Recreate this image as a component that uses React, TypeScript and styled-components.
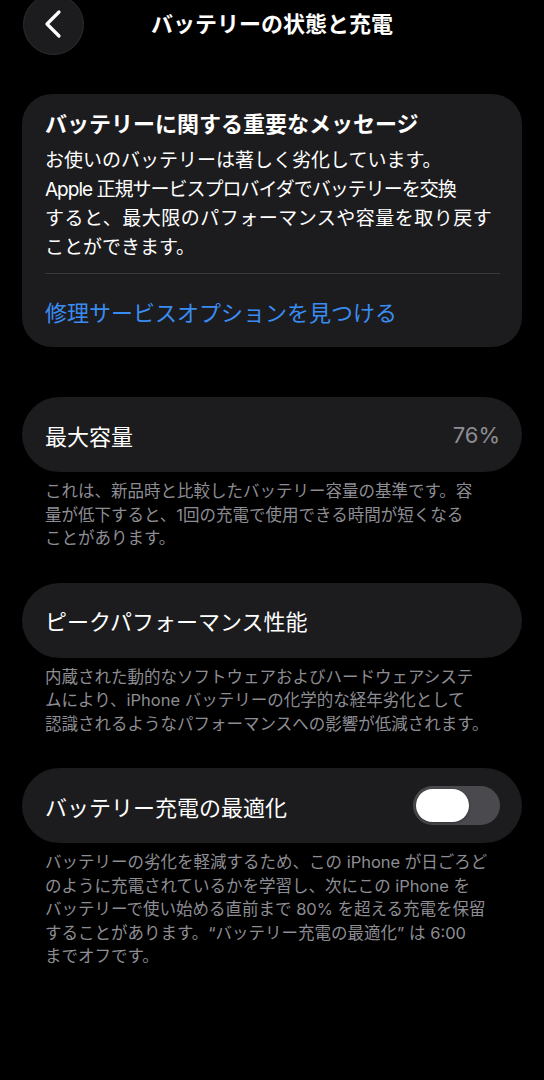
import React from 'react'
import styled, { createGlobalStyle } from 'styled-components'

const GlobalStyle = createGlobalStyle`
  html, body {
    margin: 0;
    padding: 0;
    background: #000;
  }
`

const Page = styled.div`
  width: 544px;
  min-height: 1080px;
  box-sizing: border-box;
  padding: 0 22px 40px;
  background: #000;
  color: #fff;
  font-family: Inter, "Noto Sans CJK JP", sans-serif;
  overflow: hidden;
`

const Header = styled.header`
  display: grid;
  grid-template-columns: 1fr auto 1fr;
  grid-template-rows: 48px;
  align-items: center;
`

const BackButton = styled.button`
  justify-self: start;
  width: 61px;
  height: 61px;
  margin-left: 1px;
  padding: 0;
  border: 1px solid #2c2c2e;
  border-radius: 50%;
  background: #1c1c1e;
  display: flex;
  align-items: center;
  justify-content: center;
`

const Title = styled.h1`
  margin: 0;
  font-size: 22px;
  font-weight: 700;
  line-height: 32px;
  letter-spacing: 0;
`

const MessageCard = styled.section`
  margin-top: 46px;
  padding: 14px 22px 0 23px;
  border-radius: 30px;
  background: #1c1c1e;
`

const Heading = styled.h2`
  margin: 0;
  font-size: 22px;
  font-weight: 700;
  line-height: 32px;
`

const Body = styled.div`
  margin-top: 6px;
  font-size: 19px;
  line-height: 29px;
`

const Line = styled.div<{ $track?: number }>`
  white-space: nowrap;
  letter-spacing: ${p => p.$track ?? 0}px;
`

const Divider = styled.div`
  margin-top: 11px;
  height: 1px;
  background: #38383a;
`

const LinkRow = styled.div`
  height: 73px;
  display: flex;
  align-items: center;
  font-size: 22px;
  color: #3a8cf2;
`

const Group = styled.div<{ $gap: number }>`
  margin-top: ${p => p.$gap}px;
`

const Row = styled.div`
  height: 75px;
  box-sizing: border-box;
  padding: 0 22px 0 23px;
  border-radius: 37.5px;
  background: #1c1c1e;
  display: flex;
  align-items: center;
  justify-content: space-between;
  font-size: 22px;
`

const Value = styled.span`
  color: #8d8d93;
`

const Footer = styled.div`
  padding: 8px 23px 0;
  font-size: 16.5px;
  line-height: 23.5px;
  color: #8d8d93;
`

const Track = styled.div<{ $on: boolean }>`
  width: 87px;
  height: 39px;
  box-sizing: border-box;
  padding: 0 3px;
  border-radius: 19.5px;
  background: ${p => (p.$on ? '#30d158' : '#4a4a4e')};
  display: flex;
  align-items: center;
  justify-content: ${p => (p.$on ? 'flex-end' : 'flex-start')};
`

const Knob = styled.div`
  width: 53px;
  height: 33px;
  border-radius: 16.5px;
  background: #fff;
  box-shadow: 0 1px 3px rgba(0, 0, 0, 0.35);
`

const Toggle = ({ on }: { on: boolean }) => (
  <Track $on={on}>
    <Knob />
  </Track>
)

const Chevron = () => (
  <svg width="24" height="30" viewBox="0 0 24 30" fill="none">
    <path
      d="M17 3 L5 15 L17 27"
      stroke="#fff"
      strokeWidth="3.2"
      strokeLinecap="round"
      strokeLinejoin="round"
    />
  </svg>
)

export default function App() {
  return (
    <>
      <GlobalStyle />
      <Page>
        <Header>
          <BackButton aria-label="戻る">
            <Chevron />
          </BackButton>
          <Title>バッテリーの状態と充電</Title>
          <span />
        </Header>

        <MessageCard>
          <Heading>バッテリーに関する重要なメッセージ</Heading>
          <Body>
            <Line>お使いのバッテリーは著しく劣化しています。</Line>
            <Line $track={-1}>Apple 正規サービスプロバイダでバッテリーを交換</Line>
            <Line $track={0.5}>すると、最大限のパフォーマンスや容量を取り戻す</Line>
            <Line>ことができます。</Line>
          </Body>
          <Divider />
          <LinkRow>修理サービスオプションを見つける</LinkRow>
        </MessageCard>

        <Group $gap={50}>
          <Row>
            <span>最大容量</span>
            <Value>76%</Value>
          </Row>
          <Footer>
            <Line>これは、新品時と比較したバッテリー容量の基準です。容</Line>
            <Line>量が低下すると、1回の充電で使用できる時間が短くなる</Line>
            <Line>ことがあります。</Line>
          </Footer>
        </Group>

        <Group $gap={32}>
          <Row>
            <span>ピークパフォーマンス性能</span>
          </Row>
          <Footer>
            <Line>内蔵された動的なソフトウェアおよびハードウェアシステ</Line>
            <Line>ムにより、iPhone バッテリーの化学的な経年劣化として</Line>
            <Line>認識されるようなパフォーマンスへの影響が低減されます。</Line>
          </Footer>
        </Group>

        <Group $gap={32}>
          <Row>
            <span>バッテリー充電の最適化</span>
            <Toggle on={false} />
          </Row>
          <Footer>
            <Line>バッテリーの劣化を軽減するため、この iPhone が日ごろど</Line>
            <Line>のように充電されているかを学習し、次にこの iPhone を</Line>
            <Line>バッテリーで使い始める直前まで 80% を超える充電を保留</Line>
            <Line>することがあります。“バッテリー充電の最適化” は 6:00</Line>
            <Line>までオフです。</Line>
          </Footer>
        </Group>
      </Page>
    </>
  )
}
